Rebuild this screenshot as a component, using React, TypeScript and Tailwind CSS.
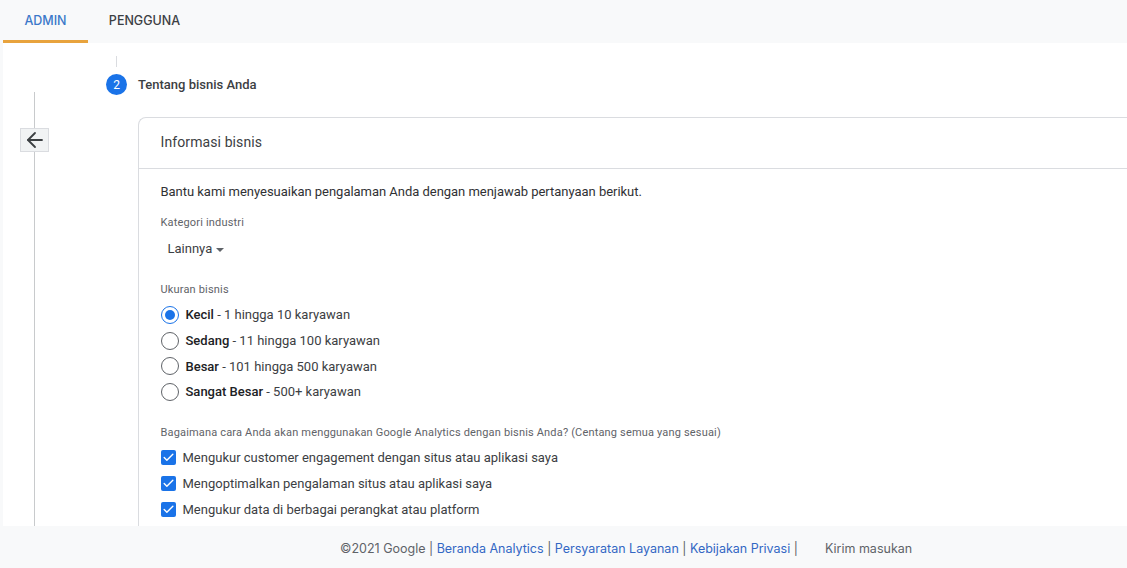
import { ArrowLeft, Check } from "lucide-react"

const sizes = [
  { name: "Kecil", detail: " - 1 hingga 10 karyawan", selected: true },
  { name: "Sedang", detail: " - 11 hingga 100 karyawan" },
  { name: "Besar", detail: " - 101 hingga 500 karyawan" },
  { name: "Sangat Besar", detail: " - 500+ karyawan" },
]

const usages = [
  "Mengukur customer engagement dengan situs atau aplikasi saya",
  "Mengoptimalkan pengalaman situs atau aplikasi saya",
  "Mengukur data di berbagai perangkat atau platform",
]

function Radio({ selected }: { selected?: boolean }) {
  return (
    <span
      className={`flex h-[18px] w-[18px] items-center justify-center rounded-full border ${
        selected ? "border-[#1a73e8]" : "border-[#5f6368]"
      }`}
    >
      {selected && <span className="h-[10px] w-[10px] rounded-full bg-[#1a73e8]" />}
    </span>
  )
}

export default function App() {
  return (
    <div className="flex h-[568px] w-[1127px] flex-col overflow-hidden bg-[#f8f9fa] font-['Roboto',sans-serif] text-[#202124]">
      <div className="flex h-[43px] shrink-0 pl-[3px] font-['Inter',sans-serif] text-[12.5px] font-medium">
        <div className="flex w-[85px] items-center justify-center border-b-[3px] border-[#e8a33d] pt-[2px] text-[#3b78c9]">
          ADMIN
        </div>
        <div className="flex w-[113px] items-center justify-center text-[#3c4043]">PENGGUNA</div>
      </div>

      <div className="ml-[3px] flex min-h-0 flex-1 overflow-hidden bg-white">
        <div className="flex w-[63px] shrink-0 flex-col items-center pt-[49px]">
          <div className="h-[36px] w-px bg-[#c8cacc]" />
          <button className="flex h-[24px] w-[29px] shrink-0 items-center justify-center border border-[#dadce0] bg-[#f1f3f4] pb-[1px] pl-[1px] text-[#3c4043]">
            <ArrowLeft size={24} strokeWidth={1.8} />
          </button>
          <div className="w-px flex-1 bg-[#c8cacc]" />
        </div>

        <div className="min-w-0 flex-1">
          <div className="ml-[50px] mt-[13px] h-[11px] w-px bg-[#dadce0]" />
          <div className="ml-[40px] mt-[7px] flex h-[21px] items-center">
            <span className="flex h-[21px] w-[21px] items-center justify-center rounded-full bg-[#1a73e8] text-[12px] text-white">
              2
            </span>
            <span className="ml-[11px] text-[13px] font-medium text-[#3c4043]">Tentang bisnis Anda</span>
          </div>

          <div className="ml-[72px] mt-[22px] h-[500px] rounded-tl-[8px] border-l border-t border-[#dadce0]">
            <div className="flex h-[51px] items-center border-b border-[#dadce0] pb-[2px] pl-[21.5px] text-[14px] tracking-[0.1px] text-[#3c4043]">
              Informasi bisnis
            </div>

            <div className="pl-[21.5px]">
              <p className="mt-[14px] text-[13px] leading-[18px] tracking-[-0.03px] text-[#303134]">
                Bantu kami menyesuaikan pengalaman Anda dengan menjawab pertanyaan berikut.
              </p>

              <p className="mt-[15px] text-[11px] leading-[14px] tracking-[0.17px] text-[#5f6368]">Kategori industri</p>
              <div className="ml-[7px] mt-[10px] flex h-[18px] items-center text-[13px] text-[#3c4043]">
                Lainnya
                <span className="ml-[4px] mt-px h-0 w-0 border-x-[4px] border-t-[4px] border-x-transparent border-t-[#5f6368]" />
              </div>

              <p className="mt-[25px] text-[11px] leading-[14px] tracking-[0.17px] text-[#5f6368]">Ukuran bisnis</p>
              <div className="mt-[9px] flex flex-col gap-[7.7px]">
                {sizes.map((size) => (
                  <div key={size.name} className="flex h-[18px] items-center text-[13px]">
                    <Radio selected={size.selected} />
                    <span className="ml-[7px] text-[#3c4043]">
                      <span className="font-medium text-[#202124]">{size.name}</span>
                      {size.detail}
                    </span>
                  </div>
                ))}
              </div>

              <p className="mt-[25px] text-[11px] leading-[14px] tracking-[0.17px] text-[#5f6368]">
                Bagaimana cara Anda akan menggunakan Google Analytics dengan bisnis Anda? (Centang semua yang sesuai)
              </p>
              <div className="mt-[10px] flex flex-col gap-[11px]">
                {usages.map((usage) => (
                  <div key={usage} className="flex h-[15px] items-center text-[13px] text-[#3c4043]">
                    <span className="flex h-[15px] w-[15px] items-center justify-center rounded-[2px] bg-[#1a73e8] text-white">
                      <Check size={13} strokeWidth={2.6} />
                    </span>
                    <span className="ml-[7px]">{usage}</span>
                  </div>
                ))}
              </div>
            </div>
          </div>
        </div>
      </div>

      <div className="flex h-[42px] shrink-0 items-center pl-[340px] pt-[4px] font-['Inter',sans-serif] text-[12.5px] text-[#5f6368]">
        <span>©2021 Google |&nbsp;</span>
        <a className="text-[#3367c4]">Beranda Analytics</a>
        <span>&nbsp;|&nbsp;</span>
        <a className="text-[#3367c4]">Persyaratan Layanan</a>
        <span>&nbsp;|&nbsp;</span>
        <a className="text-[#3367c4]">Kebijakan Privasi</a>
        <span>&nbsp;|</span>
        <span className="ml-[27px]">Kirim masukan</span>
      </div>
    </div>
  )
}
